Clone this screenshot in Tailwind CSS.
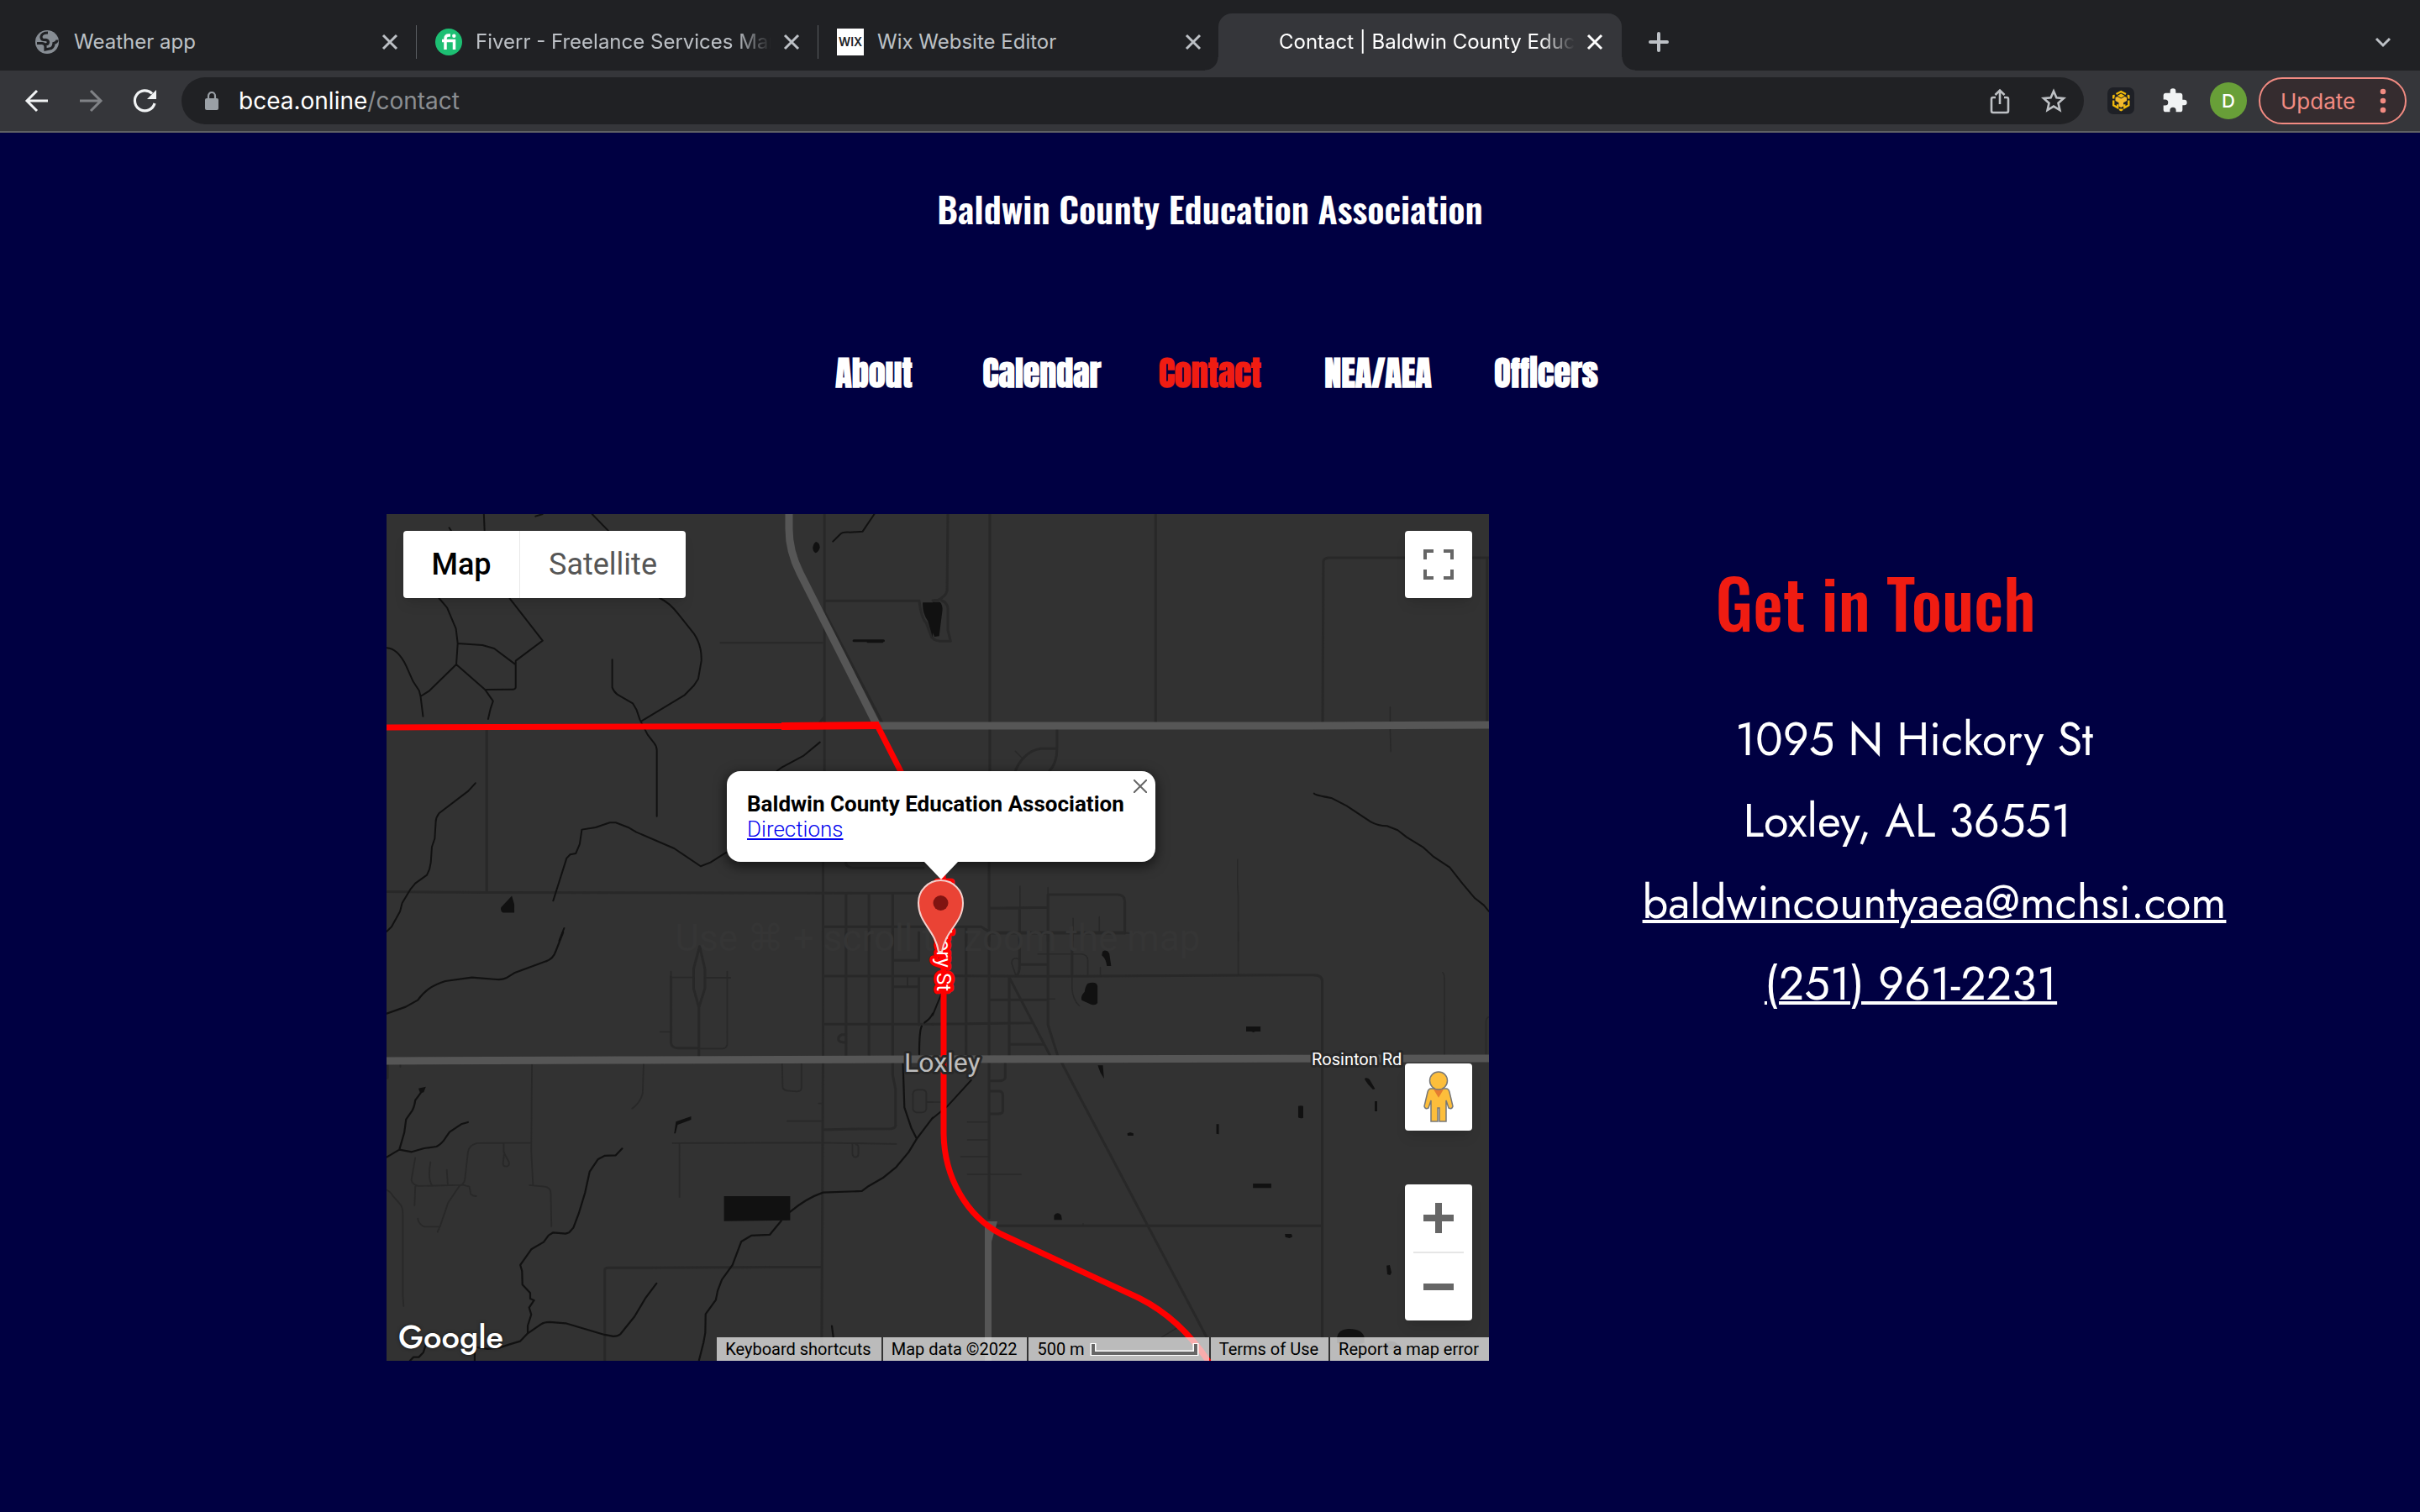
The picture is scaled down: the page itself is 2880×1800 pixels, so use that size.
<!DOCTYPE html>
<html lang="en">
<head>
<meta charset="utf-8">
<title>Contact | Baldwin County Education Association</title>
<meta name="viewport" content="width=device-width, initial-scale=1">
<script src="https://cdn.jsdelivr.net/npm/@tailwindcss/browser@4"></script>
</head>
<body class="min-h-screen bg-[#000042] font-['Inter',sans-serif] text-white">

<!-- Browser chrome -->
<header class="bg-[#202124]">
  <div class="flex h-[84px] items-end pl-[18px] pr-7">
    <div class="flex h-[68px] w-[478px] min-w-0 items-center gap-4 pl-[22px] pr-4 text-[#bdc1c6]">
      <svg class="size-8 shrink-0" viewBox="0 0 32 32"><circle cx="16" cy="16" r="14" fill="#878d94"/><path d="M17 5Q10 5 9 9.500 8.500 13 12 13.500 17 13 17.500 16 17.500 19 13.500 19M4 17.500h6q4 .5 4 4v3.500l7-1.500q3-2 3-6 4-1 4-4" fill="none" stroke="#202124" stroke-width="3.200"/></svg>
      <span class="min-w-0 flex-1 overflow-hidden whitespace-nowrap text-2xl">Weather app</span>
      <button aria-label="Close tab" class="size-8 shrink-0"><svg viewBox="0 0 32 32" fill="none" stroke="currentColor" stroke-width="3"><path d="M8 8l16 16M24 8L8 24"/></svg></button>
    </div>
    <div class="flex h-[68px] w-[478px] min-w-0 items-center text-[#bdc1c6]">
      <span class="-ml-px h-10 w-px shrink-0 bg-[#5a5d61]"></span>
      <svg class="ml-[22px] size-8 shrink-0" viewBox="0 0 32 32"><circle cx="16" cy="16" r="16" fill="#1dbf73"/><path d="M12 25V12q0-4 4-4h2M8 14.500h14.500V25" fill="none" stroke="#fff" stroke-width="3.500"/><circle cx="22.300" cy="8.800" r="2.200" fill="#fff"/></svg>
      <span class="ml-4 min-w-0 flex-1 overflow-hidden whitespace-nowrap text-2xl [mask-image:linear-gradient(to_right,black_88%,transparent)]">Fiverr - Freelance Services Marketplace</span>
      <button aria-label="Close tab" class="ml-2 mr-4 size-8 shrink-0"><svg viewBox="0 0 32 32" fill="none" stroke="currentColor" stroke-width="3"><path d="M8 8l16 16M24 8L8 24"/></svg></button>
    </div>
    <div class="flex h-[68px] w-[478px] min-w-0 items-center text-[#bdc1c6]">
      <span class="-ml-px h-10 w-px shrink-0 bg-[#5a5d61]"></span>
      <span class="ml-[22px] flex size-8 shrink-0 items-center justify-center bg-white text-sm font-semibold text-[#202124]">WIX</span>
      <span class="ml-4 min-w-0 flex-1 overflow-hidden whitespace-nowrap text-2xl">Wix Website Editor</span>
      <button aria-label="Close tab" class="ml-2 mr-4 size-8 shrink-0"><svg viewBox="0 0 32 32" fill="none" stroke="currentColor" stroke-width="3"><path d="M8 8l16 16M24 8L8 24"/></svg></button>
    </div>
    <div class="relative -ml-0.5 flex h-[68px] w-[480px] min-w-0 items-center rounded-t-2xl bg-[#35363a] pl-[72px] pr-4">
      <span class="absolute -left-4 bottom-0 size-4 bg-[radial-gradient(circle_at_0_0,transparent_15px,#35363a_16px)]"></span>
      <span class="absolute -right-4 bottom-0 size-4 bg-[radial-gradient(circle_at_100%_0,transparent_15px,#35363a_16px)]"></span>
      <span class="min-w-0 flex-1 overflow-hidden whitespace-nowrap text-2xl [mask-image:linear-gradient(to_right,black_88%,transparent)]">Contact | Baldwin County Education</span>
      <button aria-label="Close tab" class="ml-2 size-8 shrink-0"><svg viewBox="0 0 32 32" fill="none" stroke="currentColor" stroke-width="3"><path d="M8 8l16 16M24 8L8 24"/></svg></button>
    </div>
    <button aria-label="New tab" class="ml-7 flex h-[68px] w-8 items-center text-[#bdc1c6]"><svg viewBox="0 0 32 32" fill="none" stroke="currentColor" stroke-width="4" stroke-linecap="round"><path d="M16 6v20M6 16h20"/></svg></button>
    <button aria-label="Search tabs" class="ml-auto flex h-[68px] w-8 items-center text-[#bdc1c6]"><svg viewBox="0 0 32 32" fill="none" stroke="currentColor" stroke-width="3"><path d="M8 12l8 8 8-8"/></svg></button>
  </div>

  <div class="flex h-[74px] items-center border-b-2 border-[#5f6063] bg-[#35363a] pl-7 pr-4">
    <button aria-label="Back" class="size-8"><svg viewBox="0 0 32 32" fill="none" stroke="#f1f3f4" stroke-width="3"><path d="M29 16H5M16 4L4 16l12 12"/></svg></button>
    <button aria-label="Forward" class="ml-8 size-8"><svg viewBox="0 0 32 32" fill="none" stroke="#808286" stroke-width="3"><path d="M3 16h24M16 4l12 12-12 12"/></svg></button>
    <button aria-label="Reload" class="ml-8 size-8"><svg viewBox="0 0 32 32" fill="none" stroke="#f1f3f4" stroke-width="3.200"><path d="M28 19A12 12 0 1 1 25 7.500"/><path d="M30 3v11H19z" fill="#f1f3f4" stroke="none"/></svg></button>
    <div class="ml-7 flex h-14 min-w-0 flex-1 items-center rounded-full bg-[#202124] pl-7 pr-5">
      <svg class="h-[22px] w-4 shrink-0" viewBox="0 0 16 22"><rect y="8" width="16" height="14" rx="2" fill="#9aa0a6"/><path d="M4 9V5a4 4 0 0 1 8 0v4" fill="none" stroke="#9aa0a6" stroke-width="2.200"/></svg>
      <a href="#" class="ml-6 text-[28px] text-[#8b8e92]"><span class="text-white">bcea.online</span>/contact</a>
      <button aria-label="Share" class="ml-auto size-8"><svg viewBox="0 0 32 32" fill="none" stroke="#bdc0c4" stroke-width="2.600"><path d="M11 12H8a2 2 0 0 0-2 2v14a2 2 0 0 0 2 2h16a2 2 0 0 0 2-2V14a2 2 0 0 0-2-2h-3M16 20V4M10.500 9L16 3.500 21.500 9"/></svg></button>
      <button aria-label="Bookmark this page" class="ml-8 size-8"><svg viewBox="0 0 32 32" fill="none" stroke="#bdc0c4" stroke-width="2.600"><path d="M16 4.500l3.400 7.800 8.500.8-6.400 5.600 1.900 8.300L16 22.600 8.600 27l1.900-8.300-6.400-5.600 8.500-.8z"/></svg></button>
    </div>
    <button aria-label="Wallet extension" class="ml-7 size-8"><svg viewBox="0 0 32 32"><rect width="32" height="32" rx="7" fill="#1e2026"/><path d="M10.500 8L16.200 5 22 8M7.200 13.500v-3.200l1.500-.8M25.300 13.500v-3.200l-1.500-.8M7.200 15.500v5.700l5 3v-4M25.300 15.500v5.700l-5 3v-4M14.200 26l2 1.200 2-1.200M14.200 10l2 1.200 2-1.200-2-1.200z" fill="none" stroke="#f0b90b" stroke-width="2.400"/><path d="M9.500 12l2.500-1 4.200 2.500 4.300-2.500 2.500 1v4l-4 2.300v4.200l-2.800 1.500-2.700-1.500v-4.200l-4-2.300z" fill="#f3ba2f"/></svg></button>
    <button aria-label="Extensions" class="ml-8 size-8"><svg viewBox="0 0 24 24" fill="#f1f3f4"><path d="M20.500 11H19V7c0-1.100-.9-2-2-2h-4V3.500a2.500 2.500 0 0 0-5 0V5H4c-1.100 0-2 .9-2 2v3.800h1.500a2.700 2.700 0 0 1 0 5.400H2V20c0 1.100.9 2 2 2h3.800v-1.500a2.700 2.700 0 0 1 5.400 0V22H17c1.100 0 2-.9 2-2v-4h1.500a2.500 2.500 0 0 0 0-5z"/></svg></button>
    <button aria-label="Profile" class="ml-[26px] size-11 rounded-full bg-[#689f38] text-[22px] font-medium">D</button>
    <button class="ml-3.5 flex h-14 w-44 items-center justify-between rounded-full border-2 border-[#f28b82] bg-[#352c2f] pl-6 pr-[18px] text-[26px] text-[#f28b82]">Update
      <svg class="h-8 w-4" viewBox="0 0 16 32" fill="currentColor"><circle cx="8" cy="5" r="3.300"/><circle cx="8" cy="16" r="3.300"/><circle cx="8" cy="27" r="3.300"/></svg>
    </button>
  </div>
</header>

<h1 class="pt-[58px] text-center font-['Oswald','Roboto_Condensed','Liberation_Sans_Narrow','Liberation_Sans',sans-serif] text-[43px] font-semibold leading-[64px]">Baldwin County Education Association</h1>

<nav class="mt-[134px] flex justify-center text-center font-['Anton','Roboto_Condensed','Liberation_Sans_Narrow','Liberation_Sans',sans-serif] text-[40px] font-bold leading-[60px]">
  <a href="#" class="w-[200px]">About</a>
  <a href="#" class="w-[200px]">Calendar</a>
  <a href="#" class="w-[200px] text-[#f01c12]" aria-current="page">Contact</a>
  <a href="#" class="w-[200px]">NEA/AEA</a>
  <a href="#" class="w-[200px]">Officers</a>
</nav>

<main class="mt-[138px] flex items-start gap-[180px] pb-[180px] pl-[460px] pr-[228px]">
  <section aria-label="Map" class="relative h-[1008px] min-w-0 flex-1 overflow-hidden bg-[#323232] font-['Roboto',sans-serif]">
    <svg class="absolute inset-0 size-full" viewBox="0 0 1312 1008" preserveAspectRatio="xMidYMid slice" fill="none" stroke-linecap="round" stroke-linejoin="round">
      <!-- north-west tile -->
      <g transform="translate(-10 -12) scale(.4209 .3333)">
        <g stroke="#282828" stroke-width="3" class="[&>*]:[vector-effect:non-scaling-stroke]">
          <path d="M1262 36V954M1258 1278V1560M1265 346H1530q5 60 20 80l15 50M307 806V1385M24 1385L300 1388 1568 1390M1322 1278q0 20 20 22h200M1323 1390V1560M1388 1390V1560M1455 1390V1560M1258 1510H1568M1262 385L1425 780M1262 760l-14 22"/>
          <path stroke-width="2" d="M968 496H1256"/>
        </g>
        <g stroke="#111" stroke-width="2" class="[&>*]:[vector-effect:non-scaling-stroke]">
          <path d="M299 36L301 96M201 85l6 12M445 44l20-8M605 36L652 97M1403 36L1370 98 1335 101Q1312 99 1306 109L1286 134M172 336L195 370 220 445 225 498 221 573 145 667 120 687 116 667 99 634 80 580C65 540 45 515 24 514M225 498L295 504 328 516 387 572M372 337L465 488 389 560V655Q388 662 380 662L306 663M221 573L303 664 325 704 318 730 311 768M120 687L127 758M796 336C820 350 835 370 850 395L893 463C910 495 915 525 914 560L905 625 893 648 867 682 745 775M662 556V655Q666 670 677 681L720 712 731 736 740 770 762 824 780 853Q788 865 788 880V1115M1249 851L1202 900 1140 942 1127 954M275 997L255 1025 172 1105Q163 1120 163 1135L160 1195 152 1225 149 1280 145 1305 138 1325 105 1355 92 1375 68 1425 62 1455 38 1510 24 1527M986 1243L940 1280 912 1294 837 1230 730 1172 707 1155 672 1138H655L615 1155 576 1163 570 1215 559 1248 543 1252 533 1265 495 1417M526 1515L512 1560"/>
          <path d="M1345 488H1429M1385 491h40" stroke-width="3"/>
        </g>
        <path fill="#111" d="M1238 135q10 2 11 20-3 16-12 20-8-5-8-20 2-15 9-20zM378 1400l7 30v30h-32q-9-8-5-20zM1540 352h28v125l-14-60q-16-30-14-65z"/>
      </g>
      <!-- north-east tile -->
      <g transform="translate(650 -12) scale(.4273 .3333)">
        <g stroke="#282828" stroke-width="3" class="[&>*]:[vector-effect:non-scaling-stroke]">
          <path d="M42 36L40 310Q36 330 15 343L0 344M25 345Q38 350 42 370V450L50 490H20Q5 488 0 478M159 36V780M159 806V954M157 1278V1560M621 36V780M1086 780L1088 205Q1090 193 1103 192H1549M1544 200V775M346 806V870Q347 925 325 954M346 874H300C265 880 240 920 230 954M157 1444L321 1441M321 1560V1395H515Q535 1396 535 1420V1530M242 1444V1560M60 1510H135L160 1530H535M93 1510V1560M388 1535v25"/>
          <path stroke-width="1.500" d="M230 883l18 23M1274 725V780M1274 806L1276 884M849 1270V1360L851 1400V1560M243 1365V1440M321 1370v20M391 1480v50M464 1475v55M535 1531L568 1534"/>
        </g>
        <path d="M1062 1034Q1065 1040 1110 1050L1153 1078 1220 1135Q1240 1149 1265 1150L1295 1165 1320 1190 1365 1225 1395 1260 1440 1298 1475 1355 1510 1408 1535 1433 1549 1455" stroke="#111" stroke-width="2" class="[vector-effect:non-scaling-stroke]"/>
        <path fill="#111" d="M0 350H20Q28 360 27 380L22 430 18 472 5 474 0 460z"/>
      </g>
      <!-- south-west tile -->
      <g transform="translate(-10 498) scale(.4209 .3333)">
        <g stroke="#282828" stroke-width="3" class="[&>*]:[vector-effect:non-scaling-stroke]">
          <path d="M1258 0V450L1254 1530M1323 0V440M1388 0V440M1455 0V510L1463 560V690Q1462 700 1450 701L1360 702 1258 705M1529 0V100H1455M1258 156H1568M1455 194H1527M1258 328H1568M1529 160V330M641 1530V1205Q642 1198 650 1198L1254 1195M828 158V395Q830 413 848 413H907M907 440V268L892 200V130L909 50 924 130V200L907 268M1323 365h-12q-12 8-9 20 5 8 18 8M26 470V520"/>
          <path stroke-width="1.800" d="M828 140V161H892M924 162H996M987 140V400Q985 415 972 415H907M798 355H825M1142 465L1144 555Q1148 565 1160 566L1185 568Q1197 567 1197 555V465M751 465L748 575Q740 610 718 629M435 470L433 780 438 903M428 903L470 908Q487 910 488 930L490 1050M433 751L280 753Q256 760 254 785L245 885Q242 900 230 905M355 753V785L370 820Q372 836 362 836 353 836 353 825L357 785M105 805L94 885Q98 903 115 906L240 902 258 908 262 935Q268 943 278 942M148 820Q140 880 152 903M194 848L197 900M105 908L103 975M230 905L198 965 175 1050 168 1070M175 1051H130Q115 1043 112 1022M24 920Q38 930 42 942L62 970Q70 980 70 1010V1300L72 1335M833 753L1256 751 1465 756M852 753V945M1157 674H1254M1246 611h10M1341 757V792Q1343 803 1350 803 1358 801 1358 792V765Q1356 757 1350 757M1524 562H1540Q1550 564 1550 575V630Q1549 642 1537 643H1522Q1512 640 1512 628V577Q1513 564 1524 562M1550 606h18M1497 160V190M63 470v10"/>
        </g>
        <g stroke="#111" stroke-width="2.200" class="[&>*]:[vector-effect:non-scaling-stroke]">
          <path d="M523 0L503 65Q495 95 475 103L385 145 362 163Q350 170 335 168L265 161 190 174C150 190 130 210 112 242L78 266 24 290M125 565L105 600Q102 625 96 637L79 668 74 715 60 776 24 803M60 776L95 784 130 771 165 765Q180 755 190 735L202 713 235 685 254 678M690 772L672 796 640 798 622 810 598 855 585 930 567 1005 552 1055 540 1072 530 1076 495 1072 482 1082 468 1106 433 1132 402 1188 407 1210 408 1258 430 1288V1308L441 1314 427 1340 433 1365 423 1405V1432L402 1460 370 1472 345 1483 310 1488 260 1478M423 1432L460 1400Q470 1392 485 1392L530 1396 640 1437 665 1443Q678 1443 685 1435L725 1372 755 1308 787 1254M1568 290Q1562 308 1545 322M1537 335Q1530 350 1530 435M1484 470L1488 625 1508 700 1523 737 1568 662M1523 737L1500 785 1465 838 1427 877 1387 906 1368 924 1258 929Q1210 950 1165 998M1140 1030L1107 1080 1055 1083 1027 1104 1002 1188 972 1240 960 1280 955 1312 926 1363 925 1430 920 1465 907 1530M1283 1406L1287 1445M90 1530L100 1517H115L128 1500 138 1460M273 1485V1530"/>
        </g>
        <path fill="#111" d="M978 942H1165V1028L978 1031zM114 557l21-6-6 20-10 3zM842 676l43-19v12l-38 18-6 31h-4z"/>
      </g>
      <!-- south-east tile -->
      <g transform="translate(650 498) scale(.4273 .3333)">
        <g stroke="#282828" stroke-width="3" class="[&>*]:[vector-effect:non-scaling-stroke]">
          <path d="M93 0V440M157 0V1020M60 155L300 157 1060 152Q1085 152 1085 175V1446M242 0V115H318M242 115Q242 150 232 155M321 0V330L348 440M388 0V155M213 160V440M213 160L327 440M157 241H320M0 328L275 323M215 400H310M357 460L763 1446M180 1048H1085M202 465V520Q198 530 185 530H157M157 567H185Q195 568 195 580V640Q194 648 182 648H157M157 3H535"/>
          <path stroke-width="1.500" d="M320 238H340M293 77H415Q432 80 432 100V150M467 125v30M388 155V200Q390 240 408 262M851 0V150M232 155L220 110Q220 92 232 92L240 95M535 3H568M1420 143Q1425 145 1425 170V440M1549 302Q1541 305 1541 320V440M97 677H153M97 741H153M78 801H153M97 864H246M419 1040v8M638 1446L680 1413M0 606h20"/>
        </g>
        <path stroke="#111" stroke-width="2" class="[vector-effect:non-scaling-stroke]" d="M24 220L0 295M107 528L40 622 0 664"/>
        <path fill="#111" d="M473 68q12-10 19 8l5 44h-12q-2-25-14-38zM432 182q25-8 27 10v60q-5 10-18 5l-26-15q-4-15 8-30 2-20 9-30zM873 336h40v18h-15l-5 3-5-3h-15zM460 475h14l3 47q-12-20-17-47zM1205 520q8-1 12 6l15 33-6 2q-15-18-23-36zM1231 603h7v36h-7zM1018 620q7-3 14 0v42q-7 4-14-1zM790 685h7v36l-7-2zM542 718l8-4 9 4v8h-16zM892 897h51v16h-51zM338 1010q10-14 20 0l2 17h-22zM981 1077h18l3 10-8 5-12-4zM1264 1190l9-2 5 27-4 9-8-3zM1126 1446q4-28 30-30 40-2 46 30v20q-40 20-76 0zM1255 1470q20-20 40 0v20h-30z"/>
      </g>
      <!-- highways -->
      <g stroke="#565656" stroke-width="9" stroke-linecap="butt">
        <path d="M479 0V18Q479 44 492 70L585 254M583 252L1100 252 1312 251M0 651L280 650 620 649 1312 648"/>
        <path stroke-width="8" d="M716 1008V842"/>
      </g>
      <path d="M712 842h15l-7 24h-8z" fill="#565656"/>
      <path stroke="red" stroke-width="7" stroke-linecap="butt" d="M0 254L480 252.500 584 251.500 624 330 650 385Q663 410 663 450V738C664 790 690 835 731 857L895 933Q945 958 979 1010"/>
      <path stroke="red" stroke-width="9" stroke-linecap="butt" d="M470 252.500L586 251.500"/>
      <text x="656" y="520" text-anchor="middle" font-size="44" fill="#353535">Use ⌘ + scroll to zoom the map</text>
      <g font-size="24" fill="#fff" stroke="red" stroke-width="8" paint-order="stroke">
        <text transform="translate(655 568) rotate(90)" text-anchor="end">N Hickory St</text>
      </g>
      <g stroke="#282828" stroke-width="6" paint-order="stroke">
        <text x="616" y="664" font-size="32" fill="#bdbdbd">Loxley</text>
        <text x="1101" y="656" font-size="20" fill="#fff">Rosinton Rd</text>
      </g>
      <path d="M659.500 436a26.500 26.500 0 0 1 26.500 27C686 487 665 495 661 521h-4C653 495 633 487 633 463a26.500 26.500 0 0 1 26.500-27z" fill="#ea4335" stroke="#f3d0cd" stroke-width="2"/>
      <circle cx="659.500" cy="463" r="9" fill="#811411"/>
    </svg>

    <div class="absolute left-5 top-5 flex h-20 rounded-sm bg-white text-4xl shadow-lg">
      <button class="w-[139px] border-r border-[#e8e8e8] font-medium text-black">Map</button>
      <button class="w-[197px] text-[#565656]">Satellite</button>
    </div>

    <div class="absolute right-5 top-5 size-20 rounded-sm bg-white shadow-lg">
      <button aria-label="Toggle fullscreen view" class="size-20 p-[22px]"><svg viewBox="0 0 36 36" fill="none" stroke="#666" stroke-width="4"><path d="M2 12V2h10M24 2h10v10M34 24v10H24M12 34H2V24"/></svg></button>
    </div>

    <button aria-label="Drag Pegman onto the map to open Street View" class="absolute bottom-[274px] right-5 flex size-20 items-center justify-center rounded-sm bg-white shadow-lg">
      <svg class="h-[62px] w-9" viewBox="0 0 36 62" stroke="#777" stroke-width="1.500"><path d="M9 21h18q3 0 4 4l4 17q-1 4-5 2l-3-9v25H19V44h-2v16H9V35l-3 9q-4 2-5-2l4-17q1-4 4-4z" fill="#fdbe3b"/><path d="M12 21.700h12l-6 10z" fill="#e47d31" stroke="none"/><circle cx="18" cy="11.500" r="10.500" fill="#fdbe3b"/></svg>
    </button>

    <div class="absolute bottom-12 right-5 flex w-20 flex-col rounded-sm bg-white px-2.5 shadow-lg">
      <button aria-label="Zoom in" class="flex h-[82px] items-center justify-center border-b-2 border-[#e6e6e6]"><svg class="size-9" viewBox="0 0 36 36" stroke="#666" stroke-width="8"><path d="M18 0v36M0 18h36"/></svg></button>
      <button aria-label="Zoom out" class="flex h-20 items-center justify-center"><svg class="size-9" viewBox="0 0 36 36" stroke="#666" stroke-width="8"><path d="M0 18h36"/></svg></button>
    </div>

    <a href="#" class="absolute bottom-0 left-3.5 font-['Product_Sans','Jost','Lato',sans-serif] text-[38px] font-medium leading-[56px] [text-shadow:0_0_4px_#0008]">Google</a>

    <div class="absolute left-1/2 top-[306px] ml-1 h-[108px] w-[510px] -translate-x-1/2 rounded-2xl bg-white pl-6 pt-6 text-[26px] leading-[30px] text-black shadow-[0_4px_14px_2px_#0008]">
      <p class="font-bold">Baldwin County Education Association</p>
      <a href="#" class="font-light text-[#0000ee] underline">Directions</a>
      <button aria-label="Close" class="absolute right-2.5 top-2.5 size-4"><svg viewBox="0 0 16 16" stroke="#666" stroke-width="2"><path d="M0 0l16 16M16 0L0 16"/></svg></button>
      <svg class="absolute left-[234px] top-[107px] h-[22px] w-[42px]" viewBox="0 0 42 22" fill="#fff"><path d="M0 0h42L21 22z"/></svg>
    </div>

    <div class="absolute bottom-0 right-0 flex h-7 gap-0.5 text-xl leading-7 text-black">
      <button class="bg-[#f5f5f5]/70 pl-2.5 pr-3">Keyboard shortcuts</button>
      <span class="bg-[#f5f5f5]/70 pl-2.5 pr-3">Map data ©2022</span>
      <button class="flex items-center gap-1.5 bg-[#f5f5f5]/70 pl-2.5 pr-3">500 m
        <svg class="h-4 w-[130px]" viewBox="0 0 130 16" fill="none"><path d="M4 1v12h122V1" stroke="#fff" stroke-width="7"/><path d="M4 2v11h122V2" stroke="#666" stroke-width="4"/></svg>
      </button>
      <a href="#" class="bg-[#f5f5f5]/70 pl-2.5 pr-3">Terms of Use</a>
      <a href="#" class="bg-[#f5f5f5]/70 pl-2.5 pr-3">Report a map error</a>
    </div>
  </section>

  <section aria-label="Contact details" class="w-[700px] pt-[54px] text-center">
    <h2 class="pr-[140px] font-['Oswald','Roboto_Condensed','Liberation_Sans_Narrow','Liberation_Sans',sans-serif] text-[80px] font-medium leading-[100px] text-[#f01c12]">Get in Touch</h2>
    <address class="mt-[66px] whitespace-nowrap font-['Jost','Lato',sans-serif] text-[54px] not-italic leading-[97px]">
      <p class="pr-12">1095 N Hickory St</p>
      <p class="pr-16">Loxley, AL 36551</p>
      <p><a href="#" class="underline decoration-4">baldwincountyaea@mchsi.com</a></p>
      <p class="pr-14"><a href="#" class="underline decoration-4">(251) 961-2231</a></p>
    </address>
  </section>
</main>
</body>
</html>
